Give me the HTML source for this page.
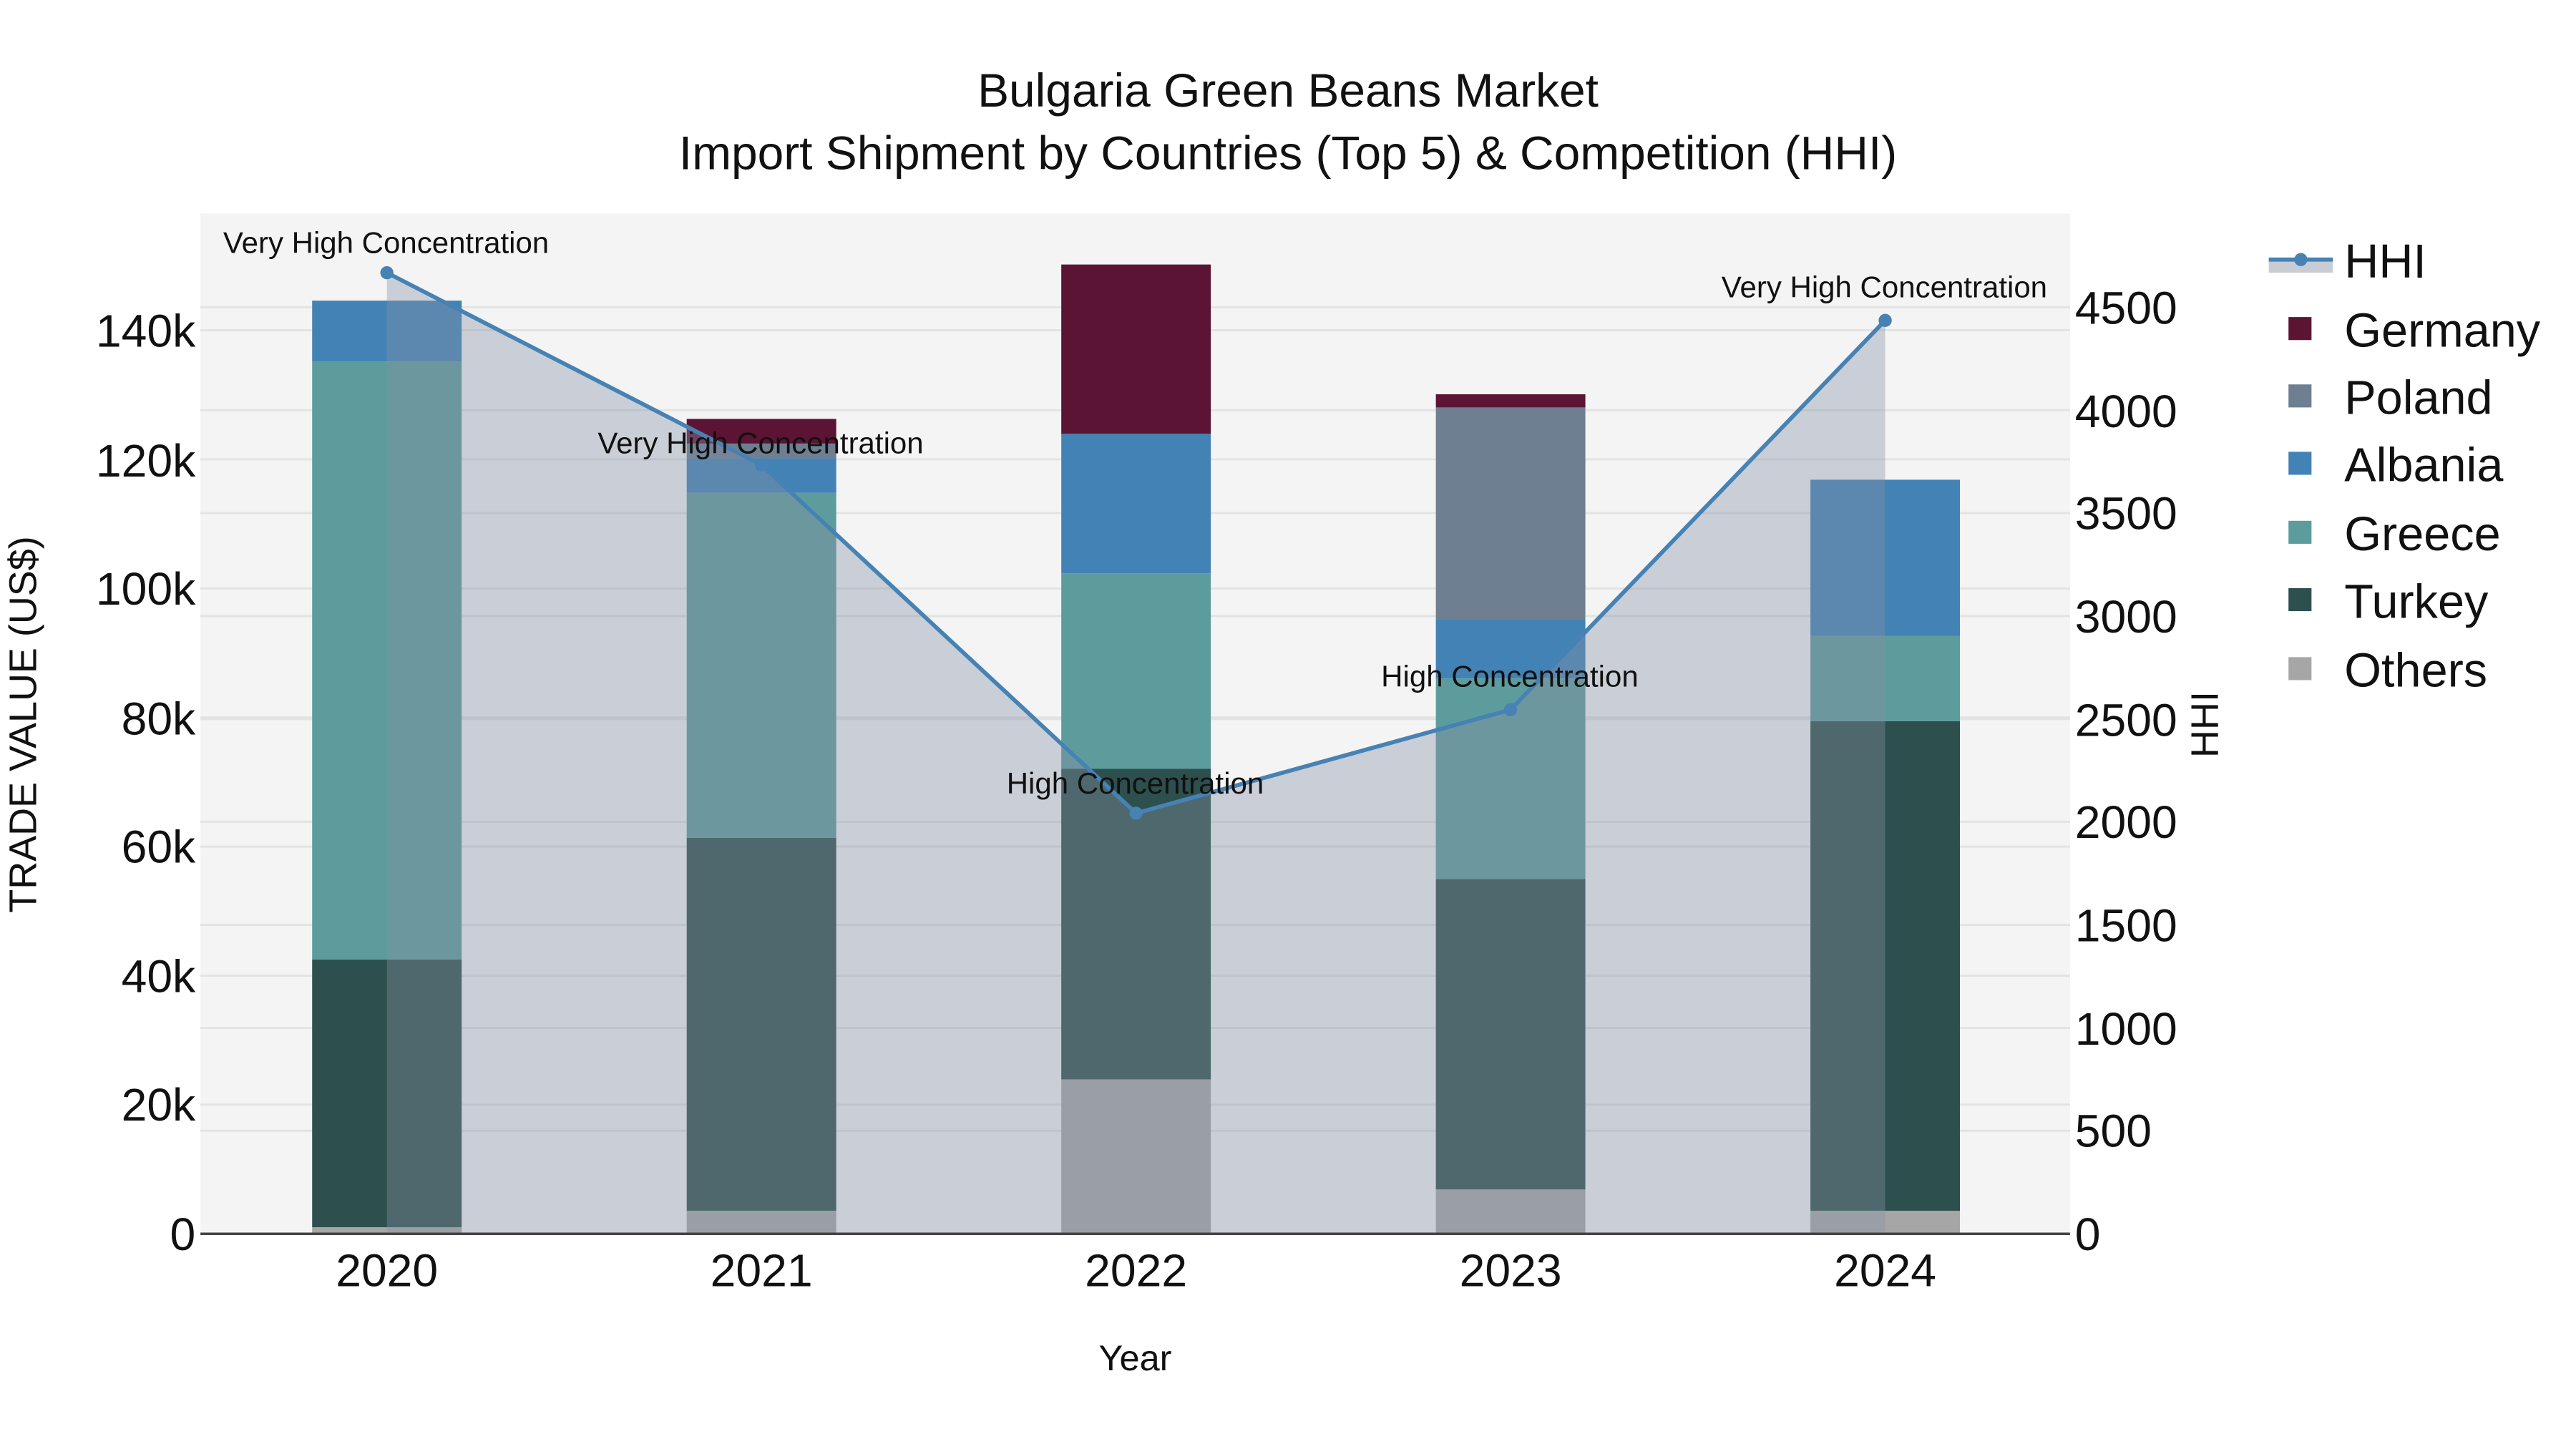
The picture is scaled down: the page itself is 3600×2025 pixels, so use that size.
<!DOCTYPE html>
<html><head><meta charset="utf-8"><style>
html,body{margin:0;padding:0;background:#fff;}
svg{display:block;}
text{font-family:"Liberation Sans",sans-serif;fill:#111;}
</style></head><body>
<svg width="3600" height="2025" viewBox="0 0 1568 882" xmlns="http://www.w3.org/2000/svg">
<rect x="0" y="0" width="1568" height="882" fill="#fff"/>
<rect x="122" y="130" width="1138" height="621" fill="#f4f4f4"/>
<g stroke="#e3e3e3" stroke-width="1.3">
<line x1="122" x2="1260" y1="672.4" y2="672.4"/><line x1="122" x2="1260" y1="593.9" y2="593.9"/>
<line x1="122" x2="1260" y1="515.3" y2="515.3"/><line x1="122" x2="1260" y1="436.7" y2="436.7"/>
<line x1="122" x2="1260" y1="358.2" y2="358.2"/><line x1="122" x2="1260" y1="279.6" y2="279.6"/>
<line x1="122" x2="1260" y1="201" y2="201"/>
<line x1="122" x2="1260" y1="688.3" y2="688.3"/><line x1="122" x2="1260" y1="625.7" y2="625.7"/>
<line x1="122" x2="1260" y1="563" y2="563"/><line x1="122" x2="1260" y1="500.3" y2="500.3"/>
<line x1="122" x2="1260" y1="437.7" y2="437.7"/><line x1="122" x2="1260" y1="375" y2="375"/>
<line x1="122" x2="1260" y1="312.3" y2="312.3"/><line x1="122" x2="1260" y1="249.7" y2="249.7"/>
<line x1="122" x2="1260" y1="187" y2="187"/>
</g>
<g>
<rect x="190" y="747" width="91" height="4" fill="#a6a6a6"/>
<rect x="190" y="584" width="91" height="163" fill="#2d4f4d"/>
<rect x="190" y="220" width="91" height="364" fill="#5c9c9c"/>
<rect x="190" y="183" width="91" height="37" fill="#4382b5"/>

<rect x="418" y="737" width="91" height="14" fill="#a6a6a6"/>
<rect x="418" y="510" width="91" height="227" fill="#2d4f4d"/>
<rect x="418" y="300" width="91" height="210" fill="#5c9c9c"/>
<rect x="418" y="279" width="91" height="21" fill="#4382b5"/>
<rect x="418" y="270" width="91" height="9" fill="#6e7f91"/>
<rect x="418" y="255" width="91" height="15" fill="#5c1435"/>

<rect x="646" y="657" width="91" height="94" fill="#a6a6a6"/>
<rect x="646" y="468" width="91" height="189" fill="#2d4f4d"/>
<rect x="646" y="349" width="91" height="119" fill="#5c9c9c"/>
<rect x="646" y="264" width="91" height="85" fill="#4382b5"/>
<rect x="646" y="161" width="91" height="103" fill="#5c1435"/>

<rect x="874" y="724" width="91" height="27" fill="#a6a6a6"/>
<rect x="874" y="535" width="91" height="189" fill="#2d4f4d"/>
<rect x="874" y="413" width="91" height="122" fill="#5c9c9c"/>
<rect x="874" y="377" width="91" height="36" fill="#4382b5"/>
<rect x="874" y="248" width="91" height="129" fill="#6e7f91"/>
<rect x="874" y="240" width="91" height="8" fill="#5c1435"/>

<rect x="1102" y="737" width="91" height="14" fill="#a6a6a6"/>
<rect x="1102" y="439" width="91" height="298" fill="#2d4f4d"/>
<rect x="1102" y="387" width="91" height="52" fill="#5c9c9c"/>
<rect x="1102" y="292" width="91" height="95" fill="#4382b5"/>
</g>
<path d="M235.5,166 L463.5,283 L691.5,495 L919.5,432 L1147.5,195 L1147.5,751 L235.5,751 Z" fill="rgb(135,145,165)" fill-opacity="0.38"/>
<polyline points="235.5,166 463.5,283 691.5,495 919.5,432 1147.5,195" fill="none" stroke="#4682b4" stroke-width="2.5"/>
<g fill="#4682b4">
<circle cx="235.5" cy="166" r="4"/><circle cx="463.5" cy="283" r="4"/><circle cx="691.5" cy="495" r="4"/><circle cx="919.5" cy="432" r="4"/><circle cx="1147.5" cy="195" r="4"/>
</g>
<line x1="122" x2="1260" y1="751" y2="751" stroke="#444" stroke-width="1.5"/>
<g font-size="18.3" text-anchor="middle">
<text x="235" y="154">Very High Concentration</text>
<text x="463" y="276">Very High Concentration</text>
<text x="691" y="483">High Concentration</text>
<text x="919" y="418">High Concentration</text>
<text x="1147" y="181">Very High Concentration</text>
</g>
<g font-size="28.7" text-anchor="middle">
<text x="784" y="65">Bulgaria Green Beans Market</text>
<text x="784" y="103">Import Shipment by Countries (Top 5) &amp; Competition (HHI)</text>
</g>
<g font-size="28" text-anchor="end">
<text x="119" y="761">0</text><text x="119" y="682">20k</text><text x="119" y="604">40k</text>
<text x="119" y="525">60k</text><text x="119" y="447">80k</text><text x="119" y="368">100k</text>
<text x="119" y="290">120k</text><text x="119" y="211">140k</text>
</g>
<g font-size="28" text-anchor="start">
<text x="1263" y="761">0</text><text x="1263" y="698">500</text><text x="1263" y="636">1000</text>
<text x="1263" y="573">1500</text><text x="1263" y="510">2000</text><text x="1263" y="448">2500</text>
<text x="1263" y="385">3000</text><text x="1263" y="322">3500</text><text x="1263" y="260">4000</text>
<text x="1263" y="197">4500</text>
</g>
<g font-size="28" text-anchor="middle">
<text x="235.5" y="783">2020</text><text x="463.5" y="783">2021</text><text x="691.5" y="783">2022</text>
<text x="919.5" y="783">2023</text><text x="1147.5" y="783">2024</text>
</g>
<text x="691" y="834" font-size="22" text-anchor="middle">Year</text>
<text transform="translate(22,441) rotate(-90)" font-size="23.5" text-anchor="middle">TRADE VALUE (US$)</text>
<text transform="translate(1350,441) rotate(-90)" font-size="23.5" text-anchor="middle">HHI</text>
<rect x="1381" y="158" width="39" height="8" fill="#c8ccd3"/>
<line x1="1381" x2="1420" y1="158" y2="158" stroke="#4682b4" stroke-width="2.5"/>
<circle cx="1400.5" cy="158" r="4" fill="#4682b4"/>
<rect x="1393" y="193" width="14" height="14" fill="#5c1435"/>
<rect x="1393" y="234" width="14" height="14" fill="#6e7f91"/>
<rect x="1393" y="275" width="14" height="14" fill="#4382b5"/>
<rect x="1393" y="317" width="14" height="14" fill="#5c9c9c"/>
<rect x="1393" y="358" width="14" height="14" fill="#2d4f4d"/>
<rect x="1393" y="400" width="14" height="14" fill="#a6a6a6"/>
<g font-size="29">
<text x="1427" y="169">HHI</text>
<text x="1427" y="211">Germany</text>
<text x="1427" y="252">Poland</text>
<text x="1427" y="293">Albania</text>
<text x="1427" y="335">Greece</text>
<text x="1427" y="376">Turkey</text>
<text x="1427" y="418">Others</text>
</g>
</svg>
</body></html>
